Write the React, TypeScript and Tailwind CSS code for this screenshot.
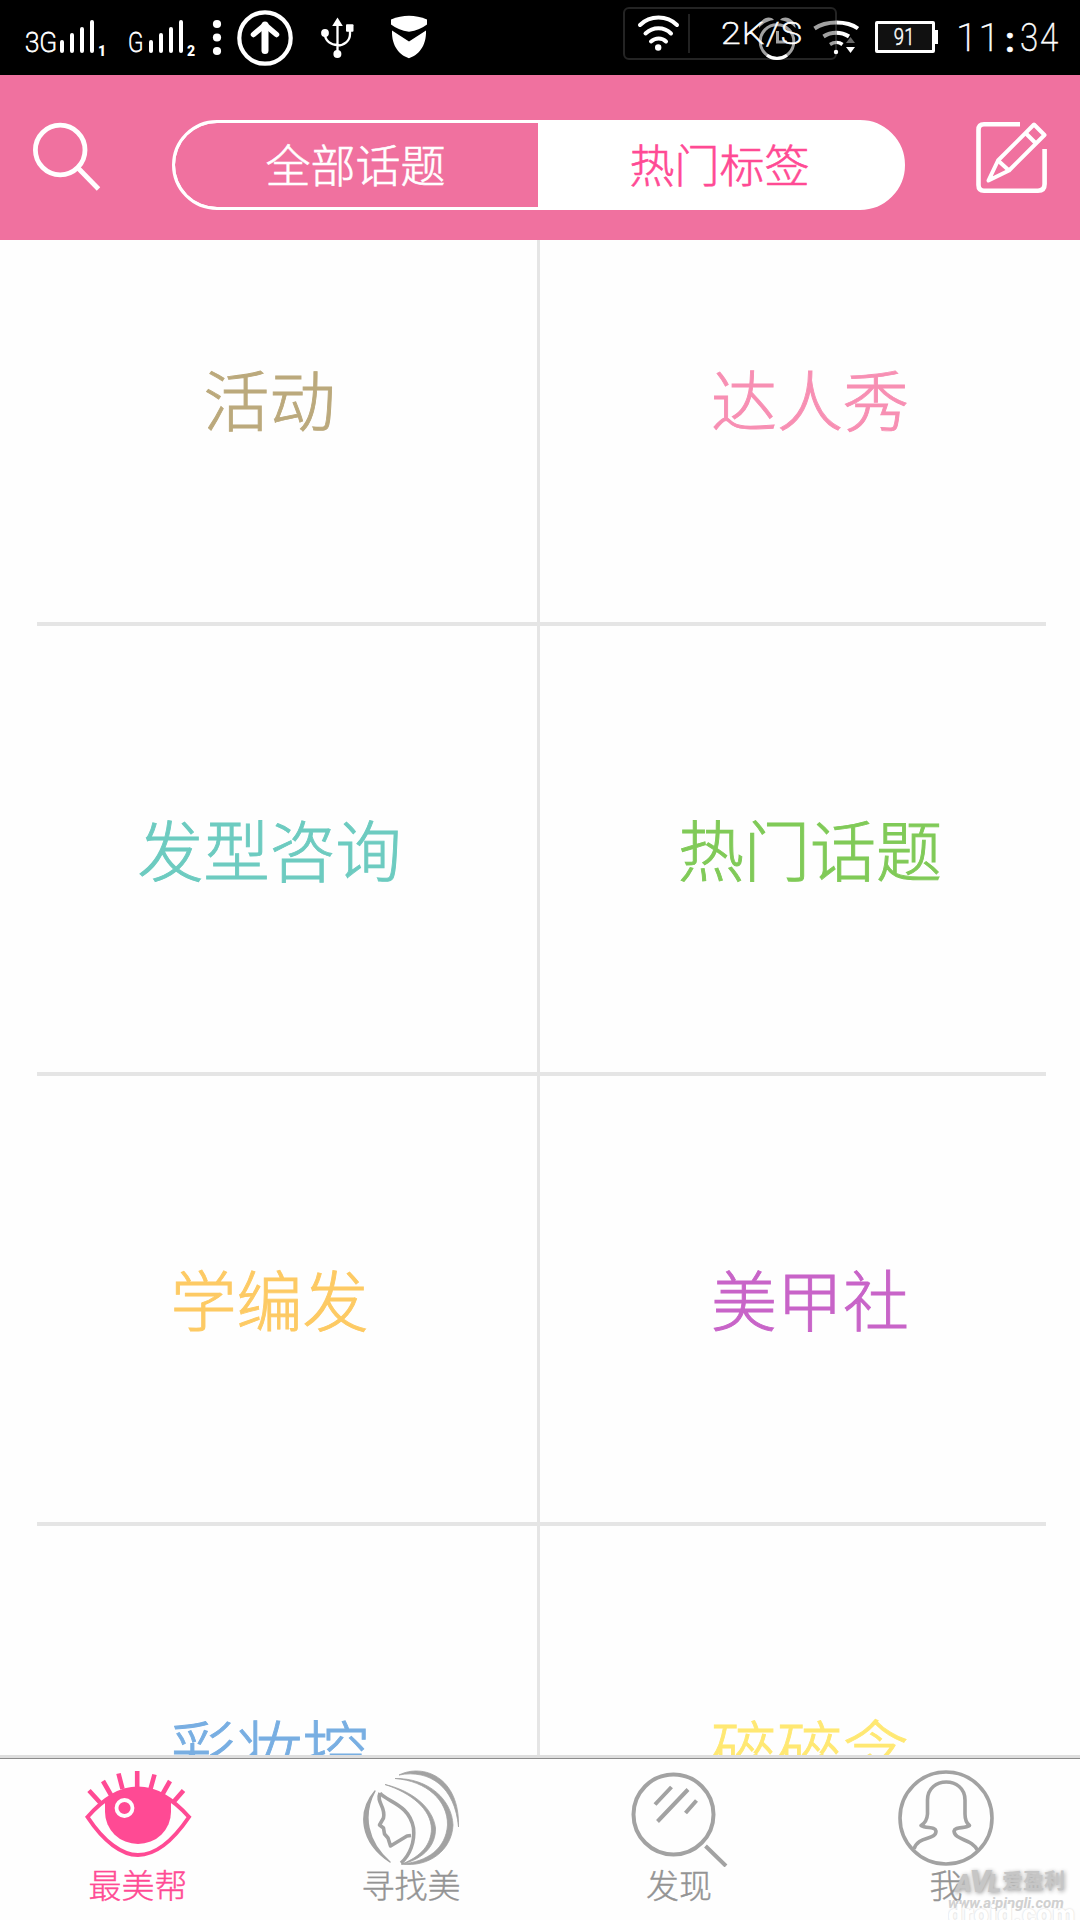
import type { ReactNode } from "react";

const tags = [
  { label: "活动", color: "text-[#bba97c]" },
  { label: "达人秀", color: "text-[#f78fb3]" },
  { label: "发型咨询", color: "text-[#6dcbc0]" },
  { label: "热门话题", color: "text-[#80ca58]" },
  { label: "学编发", color: "text-[#fdca64]" },
  { label: "美甲社", color: "text-[#c864c8]" },
  { label: "彩妆控", color: "text-[#78aee2]" },
  { label: "碎碎念", color: "text-[#ffe873]" },
];

function SignalBars() {
  return (
    <svg className="h-[34px] w-[34px]" viewBox="60 20 34 34" fill="none" stroke="#fff" strokeWidth="4" strokeLinecap="round">
      <path d="M62 42V51M72 35V51M82 29V51M92 22V51" />
    </svg>
  );
}

function StatusBar() {
  return (
    <header className="relative flex h-[75px] shrink-0 items-start bg-black font-['Roboto'] text-white">
      <span className="ml-[25px] mt-[27px] w-[35px] origin-left scale-x-[0.93] text-[28px] leading-[32px] font-extralight [-webkit-text-stroke:0.8px_white]">3G</span>
      <div className="mt-[20px]"><SignalBars /></div>
      <span className="ml-[4px] mt-[43px] w-[8px] text-[14px] leading-[16px] font-black">1</span>
      <span className="ml-[22px] mt-[27px] w-[21px] origin-left scale-x-[0.8] text-[28px] leading-[32px] font-extralight [-webkit-text-stroke:0.8px_white]">G</span>
      <div className="mt-[20px]"><SignalBars /></div>
      <span className="ml-[4px] mt-[43px] w-[9px] text-[14px] leading-[16px] font-black">2</span>
      <svg className="ml-[16px] mt-[18px] h-[40px] w-[10px]" viewBox="212 18 10 40" fill="#fff">
        <circle cx="217" cy="24" r="4.1" /><circle cx="217" cy="37.5" r="4.1" /><circle cx="217" cy="51" r="4.1" />
      </svg>
      <svg className="ml-[14px] mt-[9px] h-[58px] w-[58px]" viewBox="236 9 58 58" fill="none" stroke="#fff">
        <circle cx="265" cy="38" r="25.7" strokeWidth="4.2" />
        <path d="M265 25V50.5" strokeWidth="7" strokeLinecap="round" />
        <path d="M253.5 34.5L265 24.8L276.5 34.5" strokeWidth="5.5" strokeLinecap="round" strokeLinejoin="round" />
      </svg>
      <svg className="ml-[26px] mt-[16px] h-[44px] w-[36px]" viewBox="320 16 36 44" fill="#fff" stroke="none">
        <path d="M337.5 17.5L342.8 26H332.2Z" />
        <circle cx="337.4" cy="54" r="4" /><circle cx="325" cy="33" r="3.9" /><rect x="346" y="24.3" width="7.5" height="7.5" rx="1" />
        <path d="M337.5 24V54M325 34C325 41 331 45 337.5 45M350 30V34C350 41 344 45.5 337.5 45.5" fill="none" stroke="#fff" strokeWidth="2.3" />
      </svg>
      <svg className="ml-[34px] mt-[15px] h-[44px] w-[38px]" viewBox="390 15 38 44" fill="#fff">
        <path d="M391 19.5Q409 12 427 19.5V24.5Q420 30 409 31.8Q398 30 391 24.5Z" />
        <path d="M392 30.5L409 41.5L426 30.5C426.5 47 418 55 409 58.3C400 55 391.5 47 392 30.5Z" />
      </svg>

      <svg className="ml-[329px] mt-[16px] h-[46px] w-[40px]" viewBox="756 16 40 46" fill="none" stroke="#a1a1a1" strokeWidth="3">
        <path d="M758 28C757 20 768 14 773 20Q764 21 758 28ZM794.5 28C795 20 784 14 779 20Q788 21 794.5 28Z" fill="#a1a1a1" stroke="none" />
        <circle cx="776" cy="41.5" r="16.8" />
        <path d="M766 55.2A17 17 0 0 0 786 55.2" stroke="#fff" />
        <path d="M776.5 31V42H786" />
      </svg>
      <svg className="ml-[15px] mt-[18px] h-[38px] w-[50px]" viewBox="811 18 50 38" fill="none" strokeWidth="4">
        <defs>
          <linearGradient id="wifiFade" gradientUnits="userSpaceOnUse" x1="812" y1="0" x2="858" y2="0">
            <stop offset=".53" stopColor="#a1a1a1" /><stop offset=".53" stopColor="#fff" />
          </linearGradient>
        </defs>
        <path d="M813.5 28.5C825 20.5 846 20.5 857 28.5M822.5 36.5C830 31.5 840 31.5 848 36.5" stroke="url(#wifiFade)" />
        <path d="M829 44.5C833 41.8 838 41.8 841.5 44.5" stroke="url(#wifiFade)" strokeWidth="3.5" />
        <circle cx="835" cy="52" r="2.2" fill="#fff" />
        <path d="M849.5 37L854 43H845Z" fill="#666" /><path d="M849.5 53L854 47H845Z" fill="#fff" />
      </svg>
      <div className="ml-[13px] mt-[21px] flex items-center">
        <div className="flex h-[32px] w-[60px] items-center justify-center rounded-[2px] border-[3px] border-white bg-[#111]">
          <span className="-ml-[1px] scale-x-[0.8] text-[23px] leading-none font-light tracking-[0.5px] [-webkit-text-stroke:0.5px_white]">91</span>
        </div>
        <div className="h-[14px] w-[3px] bg-white" />
      </div>
      <time className="ml-[18px] mt-[17px] flex text-[39px] leading-[42px] font-extralight [-webkit-text-stroke:0.4px_white]">
        <span className="w-[22.5px]">1</span><span className="w-[22.5px]">1</span>
        <span className="mt-[3px] w-[19px] pl-[4px] text-[35px] font-bold">:</span>
        <span className="w-[19.5px] origin-left scale-x-[0.85]">3</span><span className="origin-left scale-x-[0.85]">4</span>
      </time>

      <div className="absolute left-[623px] top-[7px] flex h-[53px] w-[214px] items-center rounded-[6px] border-2 border-white/14">
        <svg className="ml-[11px] h-[40px] w-[44px]" viewBox="636 13 44 40" fill="none" stroke="#fff" strokeWidth="4" strokeLinecap="round">
          <path d="M640 24C650 14 667 14 677 24M645.5 32.5C653 25.5 664 25.5 671 32.5M651 40.5C655.5 36.5 662 36.5 666 40.5" />
          <circle cx="658.2" cy="46.5" r="3.2" fill="#fff" stroke="none" />
        </svg>
        <div className="ml-[8px] h-[39px] w-[2px] bg-[#222]" />
        <span className="-mt-[1px] ml-[31px] origin-left scale-x-[1.12] text-[32px] leading-none font-extralight tracking-[1px] [-webkit-text-stroke:0.6px_white]">2K/S</span>
      </div>
    </header>
  );
}

function NavBar() {
  return (
    <nav className="flex h-[165px] shrink-0 items-start bg-[#f0719f]">
      <svg className="ml-[30px] mt-[44px] h-[74px] w-[74px]" viewBox="30 119 74 74" fill="none" stroke="#fff" strokeWidth="4.8">
        <ellipse cx="60.2" cy="150" rx="24.8" ry="24.8" />
        <path d="M78.5 168.5L98.5 189" />
      </svg>
      <div className="ml-[68px] mt-[45px] flex h-[90px] w-[733px] overflow-hidden rounded-full border-[3px] border-white bg-white text-[45px] leading-none font-light">
        <button className="flex w-[363px] items-center justify-center rounded-l-full bg-[#f0719f] pb-[4px] pr-[2px] text-white [-webkit-text-stroke:0.6px_white]">全部话题</button>
        <button className="flex flex-1 items-center justify-center pb-[4px] pl-[2px] pr-[3px] text-[#ff4a94] [-webkit-text-stroke:0.6px_#ff4a94]">热门标签</button>
      </div>
      <svg className="ml-[70px] mt-[46px] h-[74px] w-[74px]" viewBox="975 121 74 74" fill="none" stroke="#fff" strokeWidth="4.6" strokeLinejoin="round">
        <path d="M1020 124.3H984Q978.5 124.3 978.5 130V185Q978.5 190.7 984 190.7H1038Q1044.6 190.7 1044.6 184V149" />
        <path d="M1034 124.5L1044.5 135L1009 170.5L988.5 180.5L998 160.5Z" strokeWidth="4" />
        <path d="M1026 133.5L1036 143.5M998 160.5L1009 170.5" strokeWidth="4" />
      </svg>
    </nav>
  );
}

function TagGrid() {
  return (
    <main className="flex h-[1515px] shrink-0 flex-col justify-end overflow-hidden bg-[#fefefe]">
      <div className="relative -mb-[219px] grid auto-rows-[450px] grid-cols-2">
        {tags.map((tag) => (
          <div key={tag.label} className={`flex items-center justify-center border-[#e5e5e5] text-[66px] leading-none font-light odd:border-r-[3px] odd:pl-[2px] ${tag.color}`}>
            <span className="-mt-[4px] [-webkit-text-stroke:0.9px_currentColor]">{tag.label}</span>
          </div>
        ))}
        <div className="absolute left-[37px] top-[448px] h-[4px] w-[1009px] bg-[#e5e5e5]" />
        <div className="absolute left-[37px] top-[898px] h-[4px] w-[1009px] bg-[#e5e5e5]" />
        <div className="absolute left-[37px] top-[1348px] h-[4px] w-[1009px] bg-[#e5e5e5]" />
      </div>
    </main>
  );
}

function EyeIcon() {
  return (
    <svg className="h-[90px] w-[108px]" viewBox="84 1769 108 90" fill="none" stroke="#ff4a94" strokeWidth="4">
      <path d="M87.5 1817C104 1798 122 1788.5 138 1788.5S172 1798 189 1817C172 1842 154 1855 138 1855S104 1842 87.5 1817Z" />
      <path d="M105 1801Q120 1788 138 1788T171 1801V1812A33 32 0 0 1 105 1812Z" fill="#ff4a94" stroke="none" />
      <path d="M89 1790.5L100 1802.5M103 1781L111 1795M118.5 1773.5L122.5 1789M137.2 1771V1788M154.5 1774.5L150.5 1789M170 1781L162 1795M183.5 1790.5L173 1802.5" strokeWidth="4.6" />
      <circle cx="124.5" cy="1808" r="8" stroke="#fefefe" strokeWidth="3.8" />
    </svg>
  );
}

function FaceIcon() {
  return (
    <svg className="h-[98px] w-[100px]" viewBox="362 1769 100 98" fill="none" stroke="#a2a2a2" strokeWidth="3" strokeLinejoin="round">
      <path d="M376 1791C358 1812 361 1842 391 1862C368 1842 363 1815 376 1791Z" fill="#a2a2a2" strokeWidth="1.4" />
      <path d="M381 1793C388 1802 410 1804 414.5 1828C416 1842 411 1855 402 1863" strokeWidth="3.6" />
      <path d="M381 1793C377 1803 387 1806 384.5 1818L380.5 1825L384.5 1828L385.5 1834L389 1838L391.5 1846L408 1836L412 1835.5" strokeWidth="3.6" />
      <path d="M386 1784.5C414 1791 434 1808 436.5 1828C437 1845 425 1859 403 1864C423 1856 432 1844 432.5 1829C432 1809 412 1793 386 1784.5Z" fill="#a2a2a2" strokeWidth="0.8" />
      <path d="M396 1778.5C430 1778 453 1800 454 1825C453 1850 430 1868 402 1864C429 1862 447 1848 448.5 1825C449 1801 428 1781 396 1778.5Z" fill="#a2a2a2" strokeWidth="0.8" />
      <path d="M400 1775C424 1763 461 1777 459.5 1827C456 1787 431 1769 400 1775Z" fill="#a2a2a2" strokeWidth="0.8" />
    </svg>
  );
}

function DiscoverIcon() {
  return (
    <svg className="h-[98px] w-[100px]" viewBox="629 1769 100 98" fill="none" stroke="#a2a2a2" strokeWidth="4">
      <circle cx="673.5" cy="1814.5" r="40" />
      <path d="M671.5 1787L655 1804.5M688 1789.5L657.5 1821.5M696.5 1800.5L685.5 1813M705.5 1846L726 1866" />
    </svg>
  );
}

function ProfileIcon() {
  return (
    <svg className="h-[98px] w-[98px]" viewBox="897 1769 98 98" fill="none" stroke="#a2a2a2" strokeWidth="3.6" strokeLinejoin="round">
      <circle cx="946" cy="1818" r="46" />
      <path d="M914 1849C918 1835 936 1841 936 1831C935 1826 926 1829 921 1825.5Q927 1822 927.5 1814V1800C927.5 1776 965 1776 965 1800V1814Q965 1822 969.5 1825.5C965 1829 955 1826 954 1831C955 1841 972 1838 978 1851" />
    </svg>
  );
}

function Tab({ label, active, className, children }: { label: string; active?: boolean; className: string; children: ReactNode }) {
  return (
    <button className={`flex shrink-0 flex-col items-center ${className}`}>
      <span className="flex h-[98px] items-start">{children}</span>
      <span className={`text-[33px] leading-[34px] font-light [-webkit-text-stroke:0.4px_currentColor] ${active ? "text-[#ff4a94]" : "text-[#949494]"}`}>{label}</span>
    </button>
  );
}

export default function App() {
  return (
    <div className="relative flex h-[1920px] w-[1080px] flex-col overflow-hidden bg-[#fefefe] font-['Noto_Sans_CJK_SC',sans-serif]">
      <StatusBar />
      <NavBar />
      <TagGrid />
      <footer className="flex h-[165px] shrink-0 border-t-[3px] border-[#dedede]">
        <div className="flex w-full border-t border-[#8c8c8c] pt-[10px]">
          <Tab label="最美帮" active className="w-[276px]"><EyeIcon /></Tab>
          <Tab label="寻找美" className="w-[270px]"><FaceIcon /></Tab>
          <Tab label="发现" className="w-[266px]"><DiscoverIcon /></Tab>
          <Tab label="我" className="w-[268px]"><ProfileIcon /></Tab>
        </div>
      </footer>
      <div className="absolute left-[948px] top-[1867px] h-[53px] w-[132px] overflow-hidden leading-none font-black text-[#c6c6c6]">
        <div className="flex items-start pl-[7px] [text-shadow:1px_1px_4px_#999]">
          <span className="w-[47px] font-['Roboto'] text-[25px] leading-[28px] tracking-[-2px] italic">A<span className="text-[32px]">V</span>L</span>
          <span className="text-[21px] leading-[24px] font-bold">爱盈利</span>
        </div>
        <div className="-mt-[2px] font-['Roboto'] text-[15px] leading-[14px] font-bold italic text-[#d0d0d0]">www.aipingli.com</div>
        <div className="-mt-[9px] font-['Roboto'] text-[26px] leading-[26px] tracking-[1px] text-white [text-shadow:0_0_2px_#ccc]">droid.com</div>
      </div>
    </div>
  );
}
